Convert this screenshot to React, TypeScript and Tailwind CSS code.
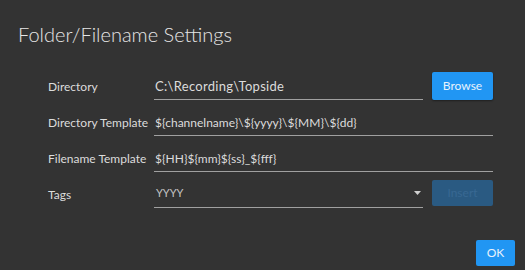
import React from "react";

const font = { fontFamily: "Lato, 'Noto Sans', sans-serif" };

function Row({ label, children }: { label: string; children: React.ReactNode }) {
  return (
    <div className="flex h-[36px] items-end">
      <div className="flex h-[24px] w-[106px] shrink-0 items-center whitespace-nowrap pb-[2px] text-[12px] text-[#dcdcdc]">{label}</div>
      {children}
    </div>
  );
}

export default function App() {
  return (
    <div className="h-[270px] w-[525px] bg-[#333333] text-[#dcdcdc]" style={font}>
      <div className="pl-[18px] pt-[20px] text-[20px] font-light leading-[28px] text-[#e6e6e6]">Folder/Filename Settings</div>
      <div className="ml-[48px] mr-[32px] mt-[16px] flex flex-col">
        <Row label="Directory">
          <div className="flex h-[24px] flex-1 items-center whitespace-nowrap border-b border-[#a0a0a0] pb-[2px] pl-[1px] text-[13px] tracking-[0.3px]">C:\Recording\Topside</div>
          <button className="ml-[9px] h-[28px] w-[61px] rounded-[2px] bg-[#2196f3] text-[12px] text-[#e8f2fc] shadow-[0_1px_2px_rgba(0,0,0,0.4)]">Browse</button>
        </Row>
        <Row label="Directory Template">
          <div className="flex h-[24px] flex-1 items-center whitespace-nowrap border-b border-[#a0a0a0] pb-[2px] pl-[1px] text-[12px]">{"${channelname}\\${yyyy}\\${MM}\\${dd}"}</div>
        </Row>
        <Row label="Filename Template">
          <div className="flex h-[24px] flex-1 items-center whitespace-nowrap border-b border-[#a0a0a0] pb-[2px] pl-[1px] text-[12px]">{"${HH}${mm}${ss}_${fff}"}</div>
        </Row>
        <Row label="Tags">
          <div className="flex h-[24px] flex-1 items-center border-b border-[#a0a0a0] pb-[5px] pl-[2px] text-[11px] text-[#c4c4c4]">
            <span className="flex-1">YYYY</span>
            <svg width="7" height="4" viewBox="0 0 7 4" className="mr-[2px]"><path d="M0 0 L7 0 L3.5 4 Z" fill="#cfcfcf" /></svg>
          </div>
          <button className="mb-[2px] ml-[9px] h-[26px] w-[61px] rounded-[2px] bg-[#2a5a82] text-[12px] text-[#386892]">Insert</button>
        </Row>
      </div>
      <div className="mr-[10px] mt-[32px] flex justify-end">
        <button className="h-[26px] w-[39px] rounded-[2px] bg-[#2196f3] text-[12px] text-[#e8f2fc]">OK</button>
      </div>
    </div>
  );
}
